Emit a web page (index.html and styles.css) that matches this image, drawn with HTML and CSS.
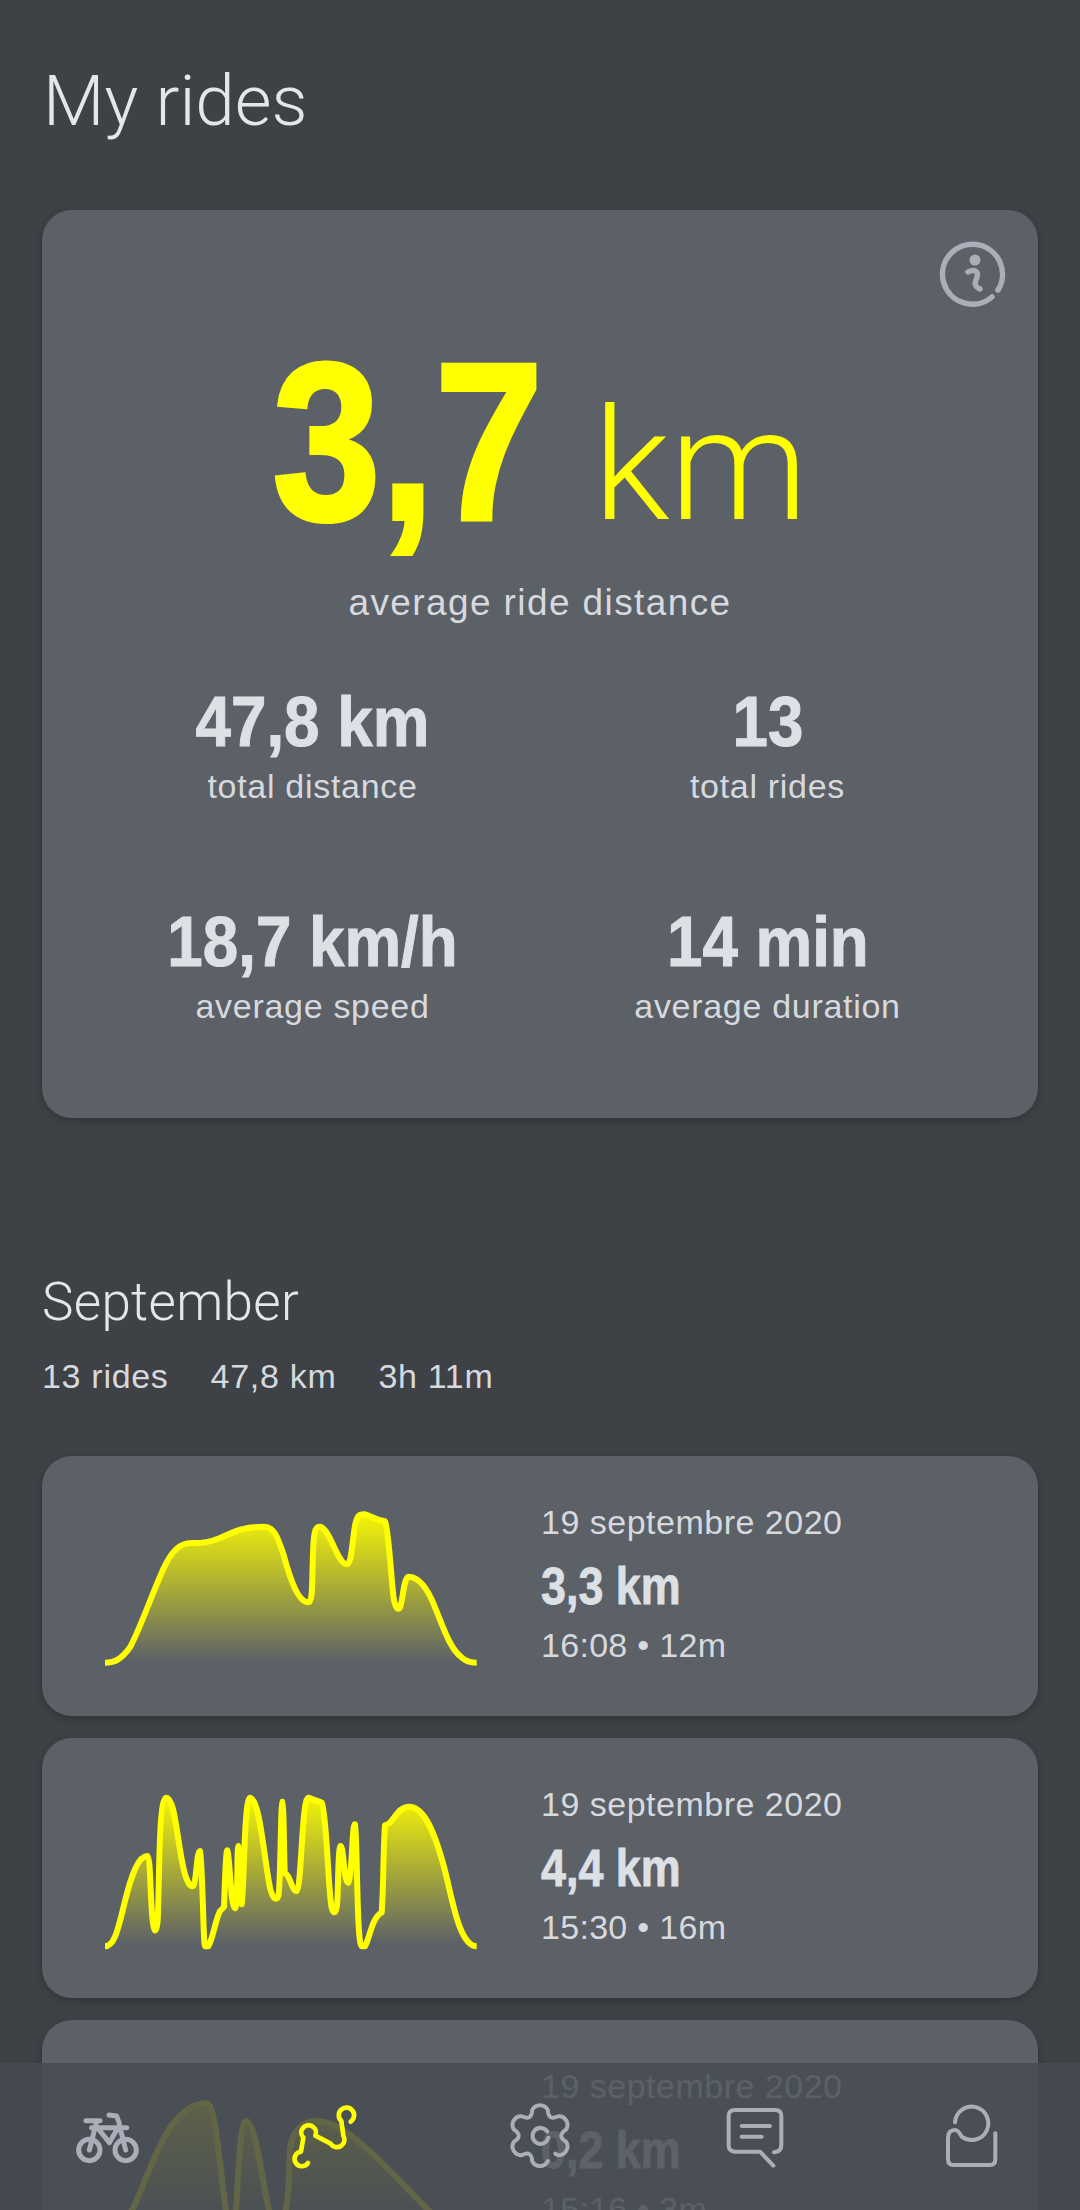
FILE: index.html
```html
<!DOCTYPE html>
<html lang="en">
<head>
<meta charset="utf-8">
<title>My rides</title>
<link rel="stylesheet" href="styles.css">
</head>
<body>
<main class="page">
  <h1 class="title">My rides</h1>
  <section class="summary">
    <svg class="info" viewBox="0 0 70 70"><path class="ico ico-thin" d="M59 52 A30 30 0 1 0 53 59"/><circle cx="36" cy="22" r="5.5" fill="#a9aeb9"/><path class="ico ico-thin" d="M29 34 C35 31 40 33 38 39 C36 44 34 48 41 51"/></svg>
    <div class="hero"><span class="hero-num">3,7</span><span class="hero-unit">km</span></div>
    <p class="hero-label">average ride distance</p>
    <div class="stats">
      <div class="stat"><div class="stat-val"><span>47,8 km</span></div><div class="stat-lab">total distance</div></div>
      <div class="stat"><div class="stat-val"><span>13</span></div><div class="stat-lab">total rides</div></div>
      <div class="stat"><div class="stat-val"><span>18,7 km/h</span></div><div class="stat-lab">average speed</div></div>
      <div class="stat"><div class="stat-val"><span>14 min</span></div><div class="stat-lab">average duration</div></div>
    </div>
  </section>
  <h2 class="month">September</h2>
  <div class="month-sum"><span>13 rides</span><span>47,8 km</span><span>3h 11m</span></div>
  <div class="rides">
    <article class="ride">
      <svg class="chart" viewBox="0 0 1380 630"><defs><linearGradient id="g1" x1="0" y1="100" x2="0" y2="551" gradientUnits="userSpaceOnUse"><stop offset="0" stop-color="#ffff00" stop-opacity=".95"/><stop offset="1" stop-color="#ffff00" stop-opacity="0"/></linearGradient></defs>
        <path class="line" fill="url(#g1)" d="M135 551 C165 551 185 540 210 505 C240 450 270 360 310 270 C335 215 360 192 395 192 C430 192 450 190 480 177 C520 160 540 145 610 143 C640 143 650 165 670 225 C690 300 715 370 745 370 C760 370 755 300 760 200 C762 150 770 142 780 143 C800 148 815 190 830 220 C840 240 850 257 862 255 C875 250 875 200 885 140 C892 105 900 105 915 106 C935 112 945 122 975 127 C985 150 990 250 1000 350 C1005 390 1015 395 1020 385 C1030 360 1030 300 1045 293 C1075 293 1100 320 1125 385 C1150 445 1170 510 1205 535 C1220 550 1235 551 1250 551"/></svg>
      <div class="ride-text"><div class="ride-date">19 septembre 2020</div><div class="ride-km">3,3 km</div><div class="ride-time">16:08 • 12m</div></div>
    </article>
    <article class="ride">
      <svg class="chart" viewBox="0 0 1380 630">
        <path class="line" fill="url(#g1)" d="M135 556 C165 556 175 500 195 420 C215 340 235 285 262 285 C272 290 270 400 278 480 C283 520 290 515 293 480 C298 400 295 110 318 110 C345 110 350 230 370 320 C380 365 392 380 400 375 C410 360 410 270 420 270 C428 310 430 556 435 556 H445 C460 530 465 480 480 450 L492 438 C495 350 498 268 502 268 C510 290 512 440 525 442 C535 440 530 258 535 255 C542 260 540 430 545 430 C552 400 552 110 570 110 C600 115 610 280 630 380 C638 415 650 420 655 405 C662 380 662 125 667 122 C672 125 672 330 675 337 C690 340 695 390 710 390 C725 380 725 110 745 110 L785 125 C800 150 805 400 815 440 C822 465 830 455 832 420 C835 350 835 255 842 255 C852 260 850 360 865 365 C878 340 875 190 885 190 C892 220 890 556 905 556 H915 C930 530 935 470 965 455 C970 400 970 250 975 193 C1000 190 1010 135 1050 137 C1095 140 1125 220 1150 310 C1175 400 1195 555 1250 556"/></svg>
      <div class="ride-text"><div class="ride-date">19 septembre 2020</div><div class="ride-km">4,4 km</div><div class="ride-time">15:30 • 16m</div></div>
    </article>
    <article class="ride">
      <svg class="chart" viewBox="0 0 1380 630">
        <path class="line" fill="url(#g1)" d="M135 551 C170 551 195 530 218 498 C280 370 320 185 441 180 C465 180 480 370 497 498 C500 530 505 551 510 551 C520 551 522 530 528 498 C535 400 540 234 558 234 C585 234 605 400 626 498 C630 530 640 551 650 551 C665 551 672 530 678 498 C695 400 680 320 700 280 C720 240 750 234 771 234 C850 234 950 340 1101 498 C1150 545 1200 551 1250 551"/></svg>
      <div class="ride-text"><div class="ride-date">19 septembre 2020</div><div class="ride-km">0,2 km</div><div class="ride-time">15:16 • 3m</div></div>
    </article>
  </div>
</main>
<nav class="nav">
  <svg class="nav-icon" viewBox="0 0 300 240"><g class="ico ico-bold"><circle cx="88" cy="165" r="32"/><circle cx="197" cy="165" r="32"/><path d="M78 77H120M147 60L170 63L178 85M95 98H200M110 80L88 165M118 105L148 143L170 105M178 90L197 165"/></g></svg>
  <svg class="nav-icon" viewBox="0 0 300 240"><path class="ico ico-on" d="M84 204 A22 22 0 1 1 63 170 L70 128 A22 22 0 1 1 106 122 L152 146 A22 22 0 1 0 190 122 L184 78 A23 23 0 1 1 212 80"/></svg>
  <svg class="nav-icon" viewBox="0 0 300 240"><g class="ico"><path d="M143.4 198.5 A26 26 0 0 1 96.6 198.5 Q95 165.3 65.4 180.5 A26 26 0 0 1 42.1 140 Q70 122 42.1 104 A26 26 0 0 1 65.4 63.5 Q95 78.7 96.6 45.5 A26 26 0 0 1 143.4 45.5 Q145 78.7 174.6 63.5 A26 26 0 0 1 197.9 104 Q170 122 197.9 140 A26 26 0 0 1 174.6 180.5 L166 176"/><path d="M142 110 A24 24 0 1 0 145 128"/></g></svg>
  <svg class="nav-icon" viewBox="0 0 300 240"><g class="ico"><path d="M192 172 Q214 170 214 150 V62 Q214 45 195 45 H75 Q56 45 56 62 V150 Q56 170 75 170 H150 L190 212"/><path d="M95 93H180M95 125H155"/></g></svg>
  <svg class="nav-icon" viewBox="0 0 300 240"><path class="ico" d="M105 82 A50 50 0 1 1 125 125 Q115 105 105 105 Q84 105 84 130 V192 Q84 210 100 210 H210 Q226 210 226 192 V115"/></svg>
</nav>
</body>
</html>
```
FILE: styles.css
```css
html, body { margin: 0; height: 2210px; overflow: hidden; background: #3e4145; }
body { position: relative; font-family: "Liberation Sans", Arial, sans-serif; color: #d6d9de; }
.page { padding: 61px 42px 0; }
.title { margin: 0 0 69px 1px; font-family: Roboto, "Liberation Sans", sans-serif; font-size: 71px; line-height: 80px; font-weight: 300; color: #e3e6ea; }
.summary { position: relative; height: 908px; background: #5c6067; border-radius: 30px; box-shadow: 0 3px 8px rgba(0,0,0,.2); }
.info { position: absolute; top: 28px; right: 29px; width: 70px; height: 70px; }
.ico { fill: none; stroke: #a9aeb9; stroke-width: 12; stroke-linecap: round; stroke-linejoin: round; }
.ico-thin { stroke-width: 5.5; }
.ico-bold { stroke-width: 15; }
.ico-on { stroke: #ffff00; stroke-width: 14; }
.hero { display: flex; justify-content: center; align-items: baseline; height: 331px; padding-top: 106px; box-sizing: border-box; color: #ffff00; line-height: 250px; gap: 50px; }
.hero-num { display: inline-block; margin: 0 -20px; transform: scaleX(.87); font-weight: 700; font-size: 224px; -webkit-text-stroke: 4px #ffff00; }
.hero-unit { font-family: Roboto, "Liberation Sans", sans-serif; font-weight: 300; font-size: 156px; }
.hero-label { margin: 40px 0 0; text-align: center; font-size: 37px; line-height: 44px; letter-spacing: 1.4px; }
.stats { display: grid; grid-template-columns: 1fr 1fr; padding: 0 43px; margin-top: 57px; row-gap: 96px; text-align: center; }
.stat-val { font-weight: 700; font-size: 70px; line-height: 80px; color: #dde0e5; }
.stat-val span { display: inline-block; transform: scaleX(.91); white-space: nowrap; -webkit-text-stroke: 1px #dde0e5; }
.stat-lab { margin-top: 4px; font-size: 34px; line-height: 40px; letter-spacing: .7px; }
.month { margin: 154px 0 0; font-family: Roboto, "Liberation Sans", sans-serif; font-size: 53px; line-height: 60px; font-weight: 300; letter-spacing: .3px; color: #e3e6ea; }
.month-sum { display: flex; gap: 42px; margin-top: 24px; font-size: 34px; line-height: 40px; letter-spacing: .7px; }
.rides { display: flex; flex-direction: column; gap: 22px; margin-top: 60px; }
.ride { display: flex; height: 260px; background: #5c6067; border-radius: 30px; box-shadow: 0 3px 8px rgba(0,0,0,.2); }
.chart { width: 460px; height: 210px; margin: 23px 0 0 18px; flex: none; }
.line { stroke: #ffff00; stroke-width: 18; stroke-linejoin: round; }
.ride-text { margin: 46px 0 0 21px; }
.ride-date, .ride-time { font-size: 34px; line-height: 40px; letter-spacing: .5px; }
.ride-time { letter-spacing: .3px; }
.ride-km { font-weight: 700; font-size: 51px; line-height: 60px; margin: 15px 0 8px; color: #dde0e5; transform: scaleX(.88); transform-origin: left center; white-space: nowrap; -webkit-text-stroke: .8px #dde0e5; }
.nav { position: absolute; left: 0; right: 0; bottom: 0; height: 147px; box-sizing: border-box; padding: 32px 0 0 60px; display: grid; grid-template-columns: 220px 220px 210px 210px 100px; align-items: start; background: rgba(71,75,82,.85); }
.nav-icon { width: 100px; height: 80px; }
```
